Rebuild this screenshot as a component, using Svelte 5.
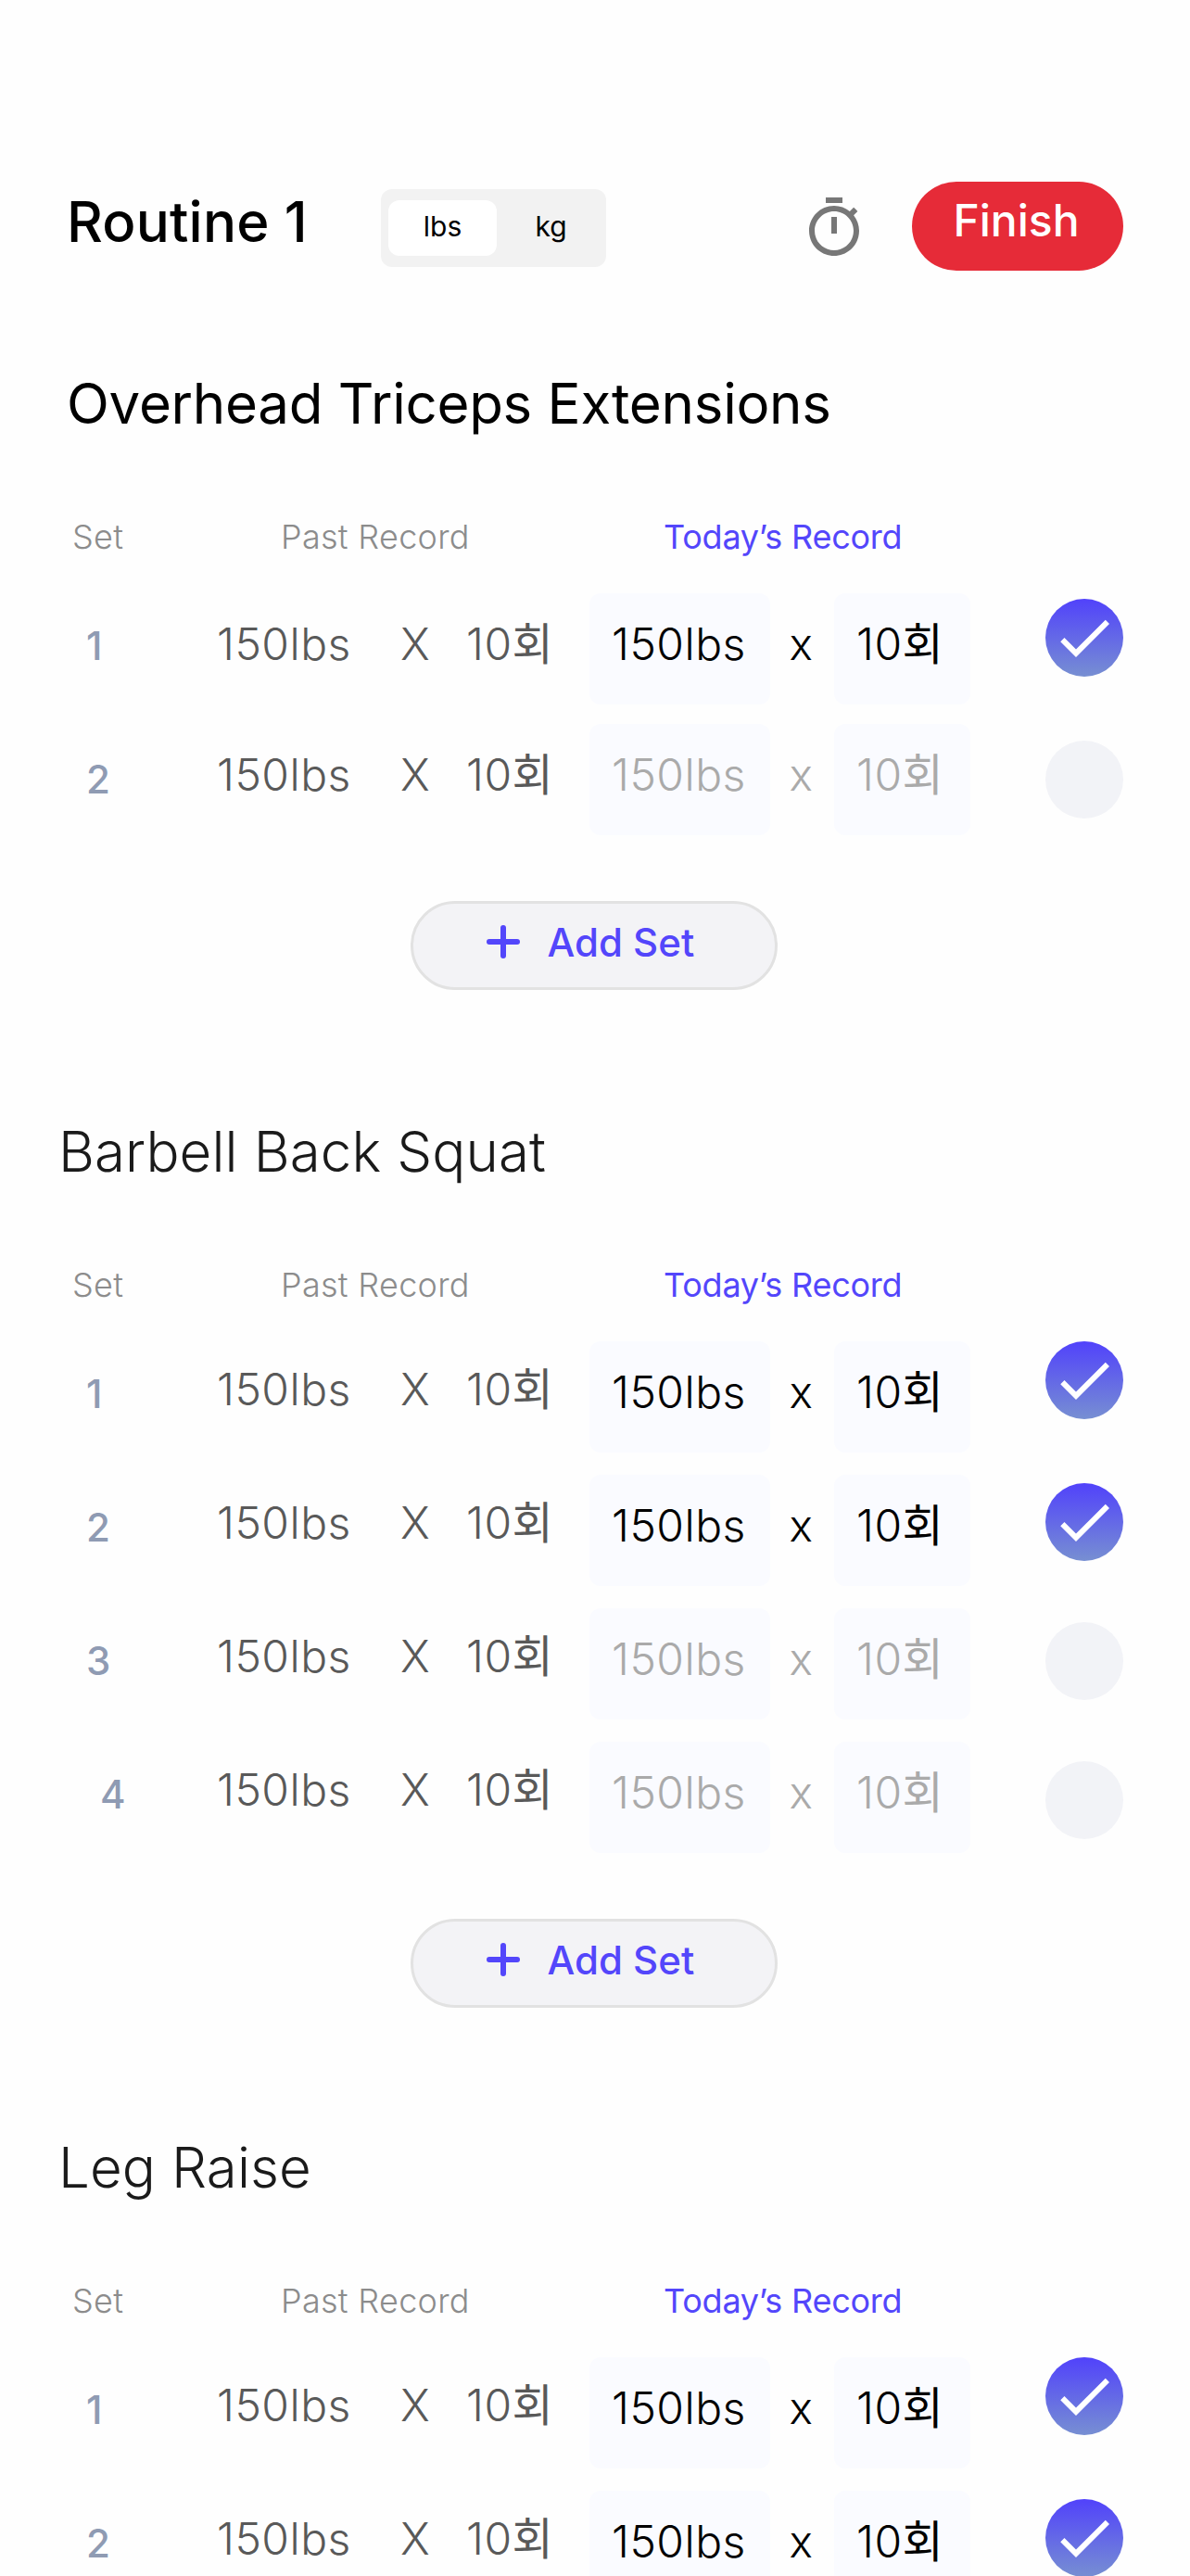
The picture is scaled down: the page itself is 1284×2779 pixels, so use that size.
<script>
  let unit = $state('lbs');

  let exercises = $state([
    {
      name: 'Overhead Triceps Extensions',
      active: true,
      sets: [{ done: true }, { done: false }]
    },
    {
      name: 'Barbell Back Squat',
      active: false,
      sets: [{ done: true }, { done: true }, { done: false }, { done: false }]
    },
    {
      name: 'Leg Raise',
      active: false,
      sets: [{ done: true }, { done: true }]
    }
  ]);

  function addSet(exercise) {
    exercise.sets.push({ done: false });
  }
</script>

<main>
  <header>
    <h1>Routine 1</h1>
    <div class="units">
      <button class:selected={unit === 'lbs'} onclick={() => (unit = 'lbs')}>lbs</button>
      <button class:selected={unit === 'kg'} onclick={() => (unit = 'kg')}>kg</button>
    </div>
    <svg class="timer" viewBox="0 0 24 24" fill="#777777">
      <path d="M9 1h6v2H9z" />
      <path d="M11 8h2v6h-2z" />
      <path d="M19.03 7.39l1.42-1.42c-.43-.51-.9-.99-1.41-1.41l-1.42 1.42C16.07 4.74 14.12 4 12 4c-4.97 0-9 4.03-9 9s4.02 9 9 9 9-4.03 9-9c0-2.12-.74-4.07-1.97-5.61zM12 20c-3.87 0-7-3.13-7-7s3.13-7 7-7 7 3.13 7 7-3.13 7-7 7z" />
    </svg>
    <button class="finish">Finish</button>
  </header>

  {#each exercises as exercise}
    <section class:active={exercise.active}>
      <h2>{exercise.name}</h2>

      <div class="labels">
        <span>Set</span>
        <span>Past Record</span>
        <span class="today">Today’s Record</span>
      </div>

      <div class="sheet">
        <div class="numbers">
          {#each exercise.sets as set, i}
            <span>{i + 1}</span>
          {/each}
        </div>

        <div class="past">
          {#each exercise.sets as set}
            <div class="record">
              <span>150lbs</span>
              <span>X</span>
              <span>10<span class="ko">회</span></span>
            </div>
          {/each}
        </div>

        <div class="current">
          {#each exercise.sets as set}
            <div class="entry" class:pending={!set.done}>
              <span class="field weight">150lbs</span>
              <span class="times">x</span>
              <span class="field reps">10<span class="ko">회</span></span>
            </div>
          {/each}
        </div>

        <div class="checks">
          {#each exercise.sets as set}
            <button class="check" class:done={set.done} aria-label="Toggle set" onclick={() => (set.done = !set.done)}>
              {#if set.done}
                <svg viewBox="0 0 24 24" fill="#ffffff">
                  <path d="M9 16.17L4.83 12l-1.42 1.41L9 19 21 7l-1.41-1.41z" />
                </svg>
              {/if}
            </button>
          {/each}
        </div>
      </div>

      <button class="add" onclick={() => addSet(exercise)}>
        <svg viewBox="0 0 36 36" stroke="#5346fb" stroke-width="6" stroke-linecap="round">
          <path d="M18 3v30M3 18h30" />
        </svg>
        Add Set
      </button>
    </section>
  {/each}
</main>

<style>
  :global(body) {
    background: #fefefe;
    overflow: hidden;
  }

  main {
    width: 1284px;
    height: 2779px;
    overflow: hidden;
    box-sizing: border-box;
    padding-top: 196px;
    font-family: Inter, "Noto Sans CJK KR", sans-serif;
    font-optical-sizing: none;
    color: #000000;
  }

  button {
    border: none;
    padding: 0;
    font: inherit;
    color: inherit;
    background: none;
  }

  h1,
  h2 {
    margin: 0;
    font-size: 60px;
    line-height: 72px;
    white-space: nowrap;
  }

  header {
    display: flex;
    align-items: flex-start;
    height: 203px;
    padding: 0 72px;
  }

  h1 {
    width: 339px;
    margin-top: 7px;
    font-weight: 500;
    letter-spacing: 0.2px;
  }

  .units {
    display: flex;
    box-sizing: border-box;
    width: 243px;
    height: 84px;
    margin-top: 8px;
    padding: 12px 8px;
    border-radius: 12px;
    background: #f2f2f2;
  }

  .units button {
    flex: none;
    width: 117px;
    padding-bottom: 3px;
    border-radius: 12px;
    font-size: 30px;
    line-height: 57px;
  }

  .units .selected {
    background: #ffffff;
  }

  .timer {
    width: 72px;
    height: 72px;
    margin: 14px 48px 0 auto;
  }

  .finish {
    box-sizing: border-box;
    width: 228px;
    height: 96px;
    padding: 0 3px 12px 0;
    border-radius: 48px;
    background: #e62b38;
    color: #ffffff;
    font-size: 48px;
    font-weight: 500;
    line-height: 84px;
    text-align: center;
  }

  section {
    display: flex;
    flex-direction: column;
    margin-bottom: 136px;
  }

  section.active {
    margin-bottom: 138px;
  }

  h2 {
    padding-left: 63px;
    font-weight: 300;
    letter-spacing: 0.1px;
    color: #1a1a1a;
  }

  .active h2 {
    padding-left: 72px;
    font-weight: 400;
    letter-spacing: -0.27px;
    color: #000000;
  }

  .labels {
    display: grid;
    grid-template-columns: 225px 413px auto;
    margin-top: 86px;
    padding-left: 78px;
    font-size: 36px;
    font-weight: 300;
    line-height: 44px;
    letter-spacing: 0.3px;
    color: #8c8c8c;
  }

  .labels .today {
    font-weight: 400;
    letter-spacing: -0.22px;
    color: #5346fb;
  }

  .sheet {
    display: grid;
    grid-template-columns: 141px 402px 492px 84px;
    align-items: start;
    margin-top: 39px;
    padding-left: 93px;
  }

  .numbers {
    display: flex;
    flex-direction: column;
    gap: 93px;
    padding-top: 31px;
    color: #8f9bb3;
    font-size: 42px;
    font-weight: 500;
    line-height: 51px;
  }

  .numbers span:nth-child(4) {
    padding-left: 15px;
  }

  .past {
    display: flex;
    flex-direction: column;
    gap: 86px;
    padding-top: 23px;
    color: #595959;
  }

  .active .past {
    gap: 83px;
    padding-top: 26px;
  }

  .record {
    display: grid;
    grid-template-columns: 198px 71px auto;
    font-size: 48px;
    font-weight: 300;
    line-height: 58px;
    letter-spacing: 0.5px;
  }

  .ko {
    font-weight: 400;
  }

  .current {
    display: flex;
    flex-direction: column;
    gap: 24px;
  }

  .active .current {
    gap: 21px;
  }

  .entry {
    display: flex;
    font-size: 48px;
    font-weight: 300;
    line-height: 58px;
    letter-spacing: 0.5px;
  }

  .entry.pending {
    color: #aaaaaa;
  }

  .field {
    box-sizing: border-box;
    height: 120px;
    padding: 26px 0 0 24px;
    border-radius: 12px;
    background: #fafbff;
  }

  .weight {
    width: 195px;
  }

  .reps {
    width: 147px;
  }

  .times {
    box-sizing: border-box;
    width: 69px;
    padding: 26px 2px 0 0;
    text-align: center;
  }

  .checks {
    display: flex;
    flex-direction: column;
    gap: 66px;
  }

  .active .checks {
    padding-top: 6px;
  }

  .check {
    display: flex;
    width: 84px;
    height: 84px;
    padding: 6px;
    box-sizing: border-box;
    border-radius: 50%;
    background: #f2f3f7;
  }

  .check:first-child {
    margin-bottom: 3px;
  }

  .check.done {
    background: linear-gradient(180deg, #5142fb 0%, #778fd2 100%);
  }

  .check svg {
    width: 72px;
    height: 72px;
  }

  .add {
    display: flex;
    align-items: center;
    align-self: center;
    gap: 30px;
    box-sizing: border-box;
    width: 396px;
    height: 96px;
    margin: 71px 3px 0 0;
    padding: 0 0 8px 79px;
    border: 3px solid #e2e2e2;
    border-radius: 48px;
    background: #f3f3f6;
    color: #5346fb;
    font-size: 42px;
    font-weight: 500;
    line-height: 51px;
  }

  .add svg {
    width: 36px;
    height: 36px;
  }
</style>
